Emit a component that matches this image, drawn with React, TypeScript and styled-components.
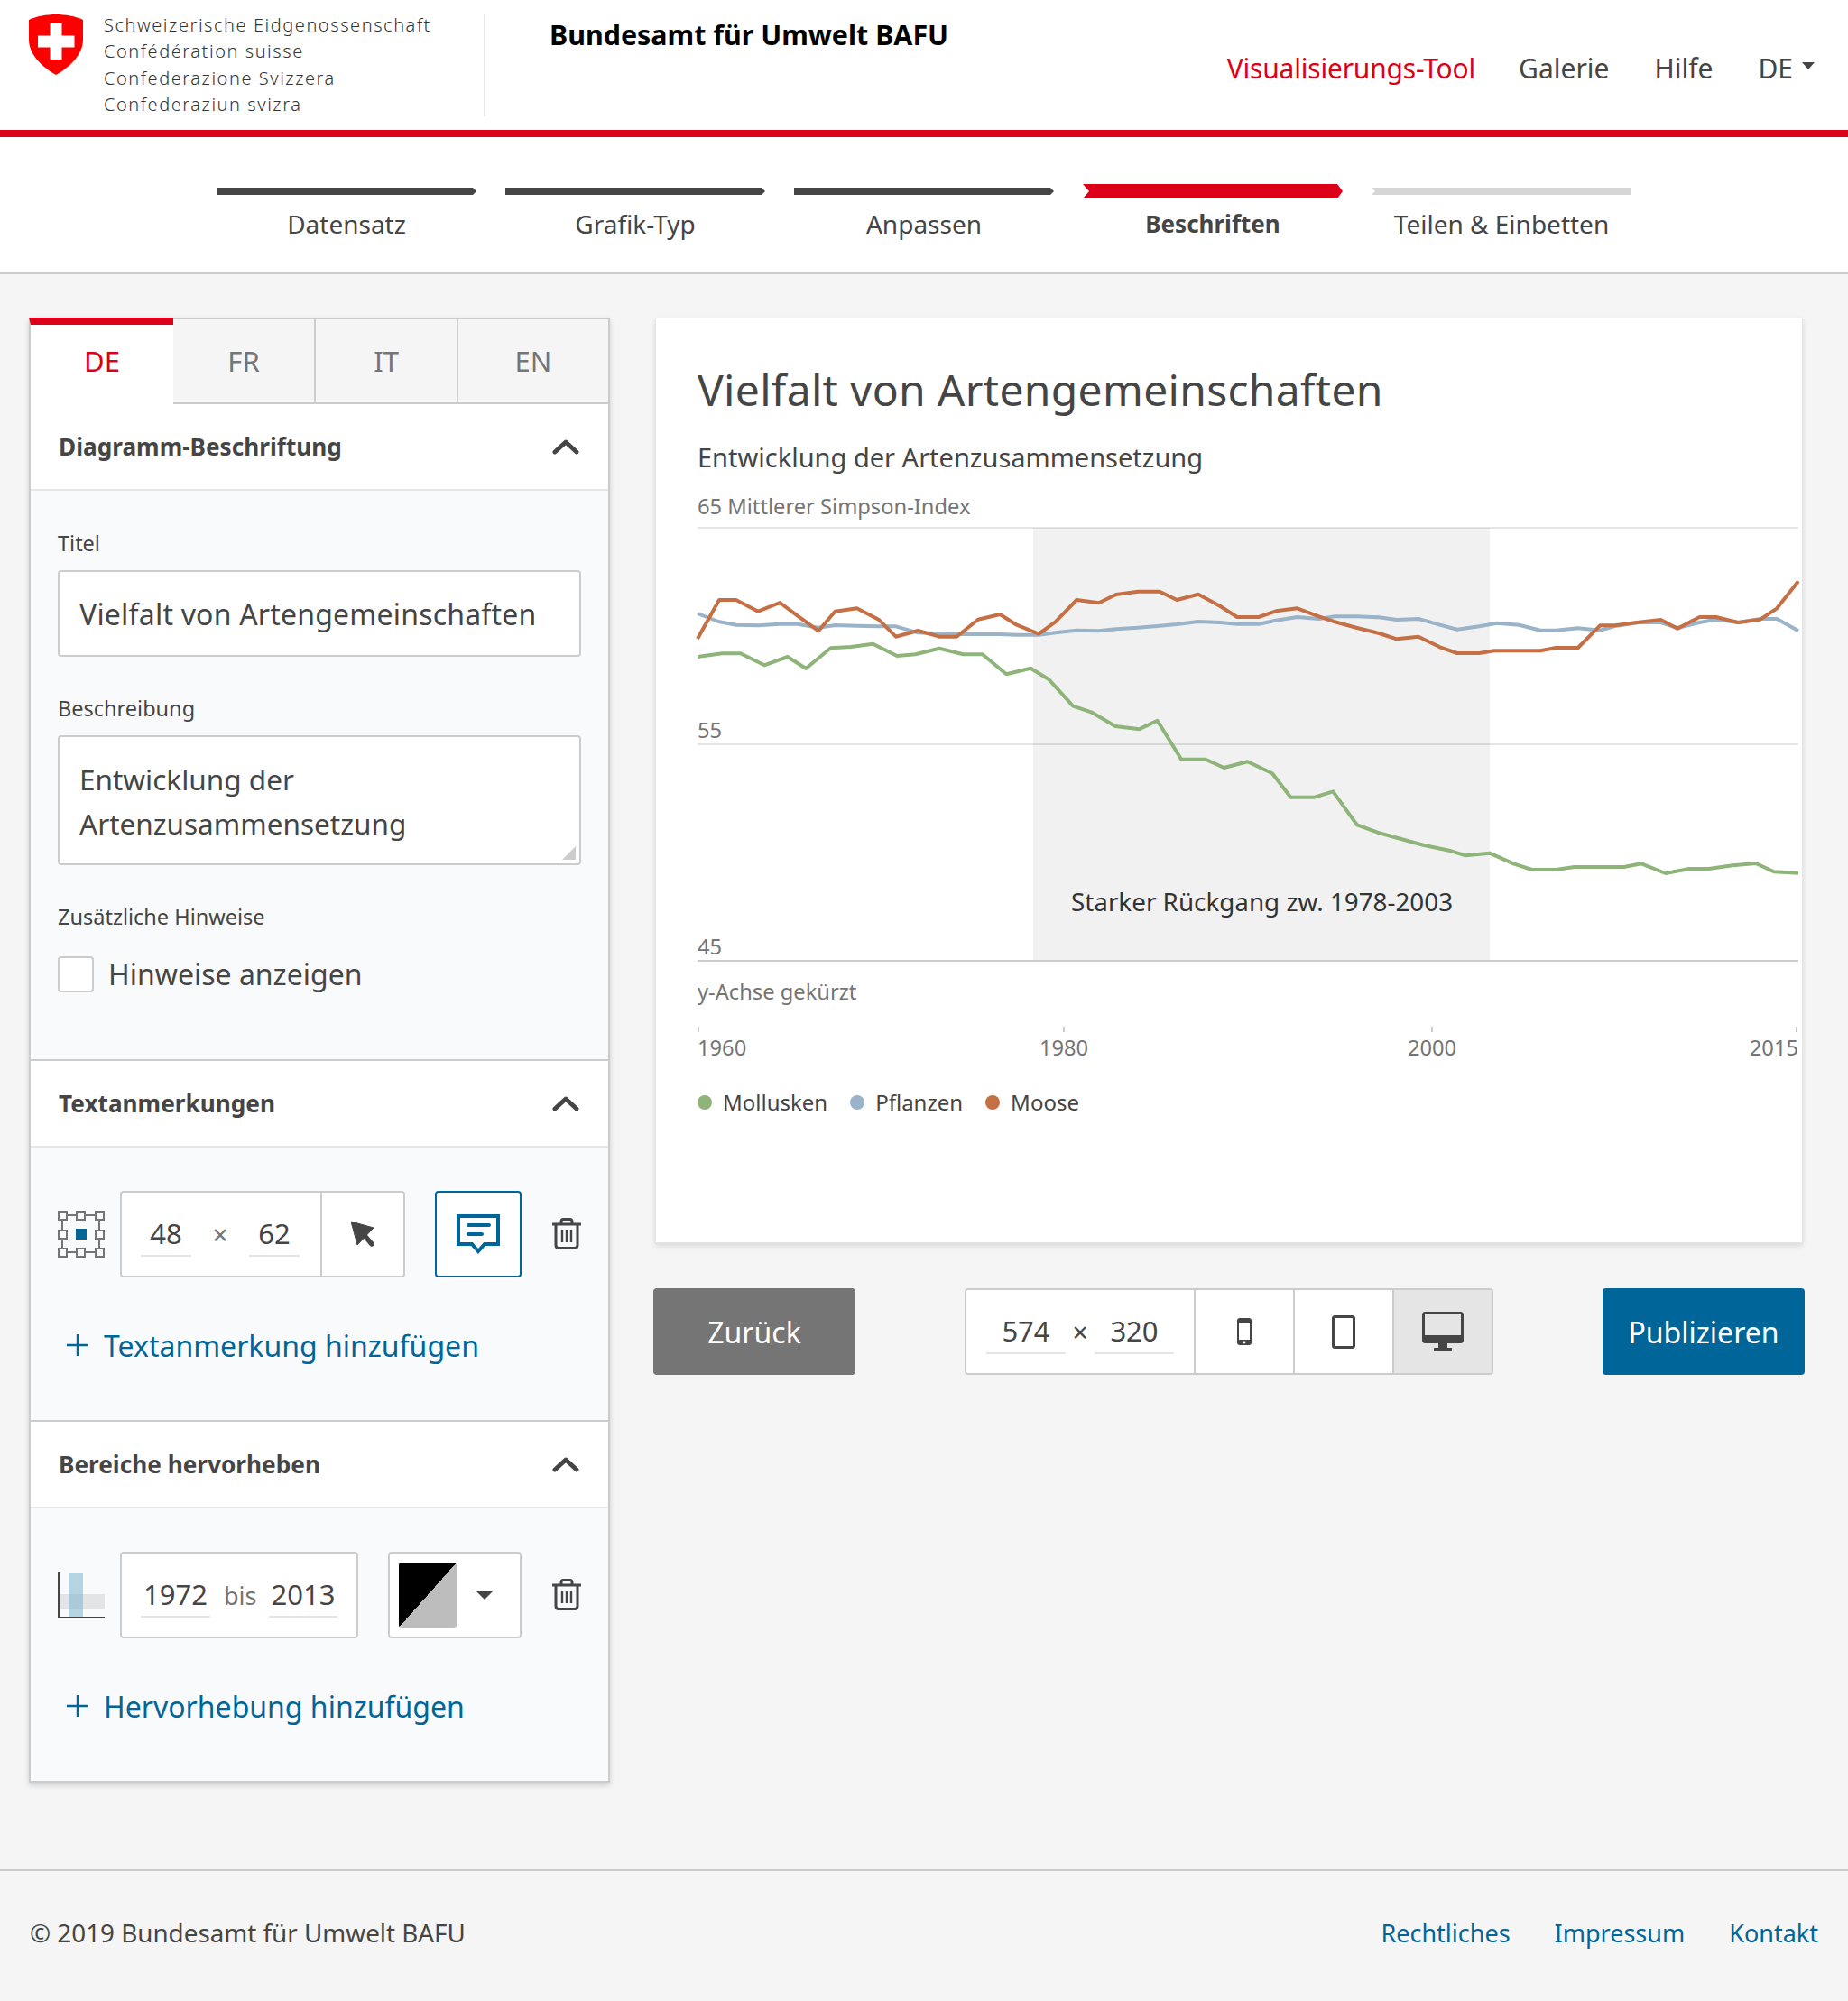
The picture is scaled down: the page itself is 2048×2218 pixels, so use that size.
import React from "react"
import styled, { createGlobalStyle } from "styled-components"

const RED = "#dc0018"
const BLUE = "#006699"
const TEXT = "#454545"
const MUTED = "#757575"
const BORDER = "#cccccc"
const LIGHT = "#e5e5e5"

const GlobalStyle = createGlobalStyle`
    * {
        box-sizing: border-box;
    }

    html, body {
        margin: 0;
        padding: 0;
        background: #f5f5f5;
        color: ${TEXT};
        font-family: "Noto Sans", "Open Sans", sans-serif;
    }
`

type Point = [number, number]

// traced from the chart, in px from the top left of the plot
const MOOSE: Point[] = [[0, 123], [24, 80], [42.7, 80], [67.2, 92.7], [91.3, 83], [110.9, 97.7], [134.1, 114.3], [152.5, 92.7], [176.6, 89.3], [200.7, 101.7], [219.8, 120.7], [244.3, 114], [268, 120.7], [287.2, 120.7], [310.9, 101.7], [335.3, 96], [353.7, 107.7], [378.2, 117.7], [396.6, 104.3], [420.2, 80], [444.7, 83.3], [463.9, 74], [488.4, 70.7], [512.1, 70.7], [531.3, 80], [554.9, 73.7], [579, 86.7], [598, 99], [621.9, 99], [641.1, 92.3], [664.7, 89.3], [688.8, 98.3], [706.4, 104.3], [730.9, 111], [755.3, 117], [774.9, 123.3], [799, 120.7], [822.7, 132.3], [841.9, 139], [866.4, 139], [882.7, 136.3], [934.1, 136.3], [951.3, 133], [975.8, 133], [1000.2, 108.3], [1016.6, 108.3], [1043.1, 104.7], [1067.6, 102], [1086, 111.7], [1110.4, 99], [1128.8, 99], [1153.3, 105], [1177.8, 101.7], [1196.2, 89.3], [1220, 59.3]]
const PLANTS: Point[] = [[0, 95], [23.1, 104], [42.7, 107.7], [67.2, 108.3], [91.3, 106.7], [110.9, 106.7], [134.1, 110.7], [152.5, 108], [176.6, 108.7], [200.7, 109.3], [219.8, 109.3], [244.3, 116.3], [268, 117.3], [287.2, 118], [310.9, 118], [335.3, 118], [353.7, 118.7], [378.2, 118.7], [396.6, 116.3], [420.2, 113.7], [444.7, 114.3], [463.9, 112.3], [488.4, 110.7], [512.1, 108.7], [531.3, 107], [554.9, 104], [579, 105], [597.8, 106.7], [621.9, 106.7], [641.1, 102.7], [664.7, 99], [688.8, 101], [706.4, 98.3], [730.9, 98.3], [755.3, 99.3], [774.9, 102], [799, 101], [822.7, 107.7], [841.9, 112.7], [866.4, 109.3], [886, 105.7], [910.4, 107.7], [934.1, 113.7], [951.3, 113.7], [975.8, 111.3], [1000.2, 113.7], [1016.6, 109], [1043.1, 105], [1067.6, 105], [1086, 111], [1110.4, 105], [1128.8, 101.7], [1153.3, 105], [1177.8, 101], [1196.2, 101], [1220, 114.3]]
const MOLLUSCS: Point[] = [[0, 143], [27.2, 139.3], [47.6, 139.3], [74.1, 152.3], [99.8, 143], [120.2, 156], [147.6, 133.3], [170, 132], [194.5, 128.7], [221.1, 142], [241.5, 140.3], [268, 133.7], [294.5, 140.3], [315.8, 140.3], [342.3, 162.3], [369.2, 155.7], [389.6, 168.3], [416.2, 197.7], [436.2, 204.3], [463.1, 220], [489.6, 223.3], [509.6, 213.7], [536.2, 256.7], [563.1, 256.7], [583.5, 266], [609.6, 259.3], [637, 272.3], [657.4, 298.7], [683.9, 298.7], [704.3, 292.3], [730.9, 329.3], [755.3, 338.3], [779.8, 345], [804.3, 351.7], [832.9, 357.7], [851.3, 363.3], [877.8, 360.7], [904.3, 372.3], [924.7, 379], [951.3, 379], [971.7, 376], [1026.8, 376], [1046, 372.3], [1072.9, 383], [1099, 378], [1120.7, 378], [1147.2, 374.3], [1172.9, 372], [1192.9, 381.3], [1220, 382.7]]

const SERIES = [
    { name: "Mollusken", color: "#8fb479", points: MOLLUSCS },
    { name: "Pflanzen", color: "#9ab3c8", points: PLANTS },
    { name: "Moose", color: "#c56f45", points: MOOSE },
]

const STEPS = ["Datensatz", "Grafik-Typ", "Anpassen", "Beschriften", "Teilen & Einbetten"]
const ACTIVE_STEP = 3
const LANGUAGES = ["DE", "FR", "IT", "EN"]
const X_TICKS = [
    { label: "1960", x: 1, textX: 0, anchor: "start" },
    { label: "1980", x: 406, textX: 406, anchor: "middle" },
    { label: "2000", x: 814, textX: 814, anchor: "middle" },
    { label: "2015", x: 1218, textX: 1220, anchor: "end" },
]

const Shield = () => (
    <svg width="60" height="67" viewBox="0 0 60 67">
        <path d="M0 6C8 2 20 0 30 0C40 0 52 2 60 6V28C60 44 46 58 30 67C14 58 0 44 0 28Z" fill="#ff0000" />
        <path d="M23.5 10H36.5V23.5H50.5V36.5H36.5V50H23.5V36.5H10V23.5H23.5Z" fill="#fff" />
    </svg>
)

const Chevron = () => (
    <svg width="30" height="18" viewBox="0 0 30 18">
        <path d="M3 15L15 4L27 15" fill="none" stroke={TEXT} strokeWidth="5" strokeLinecap="round" strokeLinejoin="round" />
    </svg>
)

const Trash = () => (
    <TrashSvg width="32" height="35" viewBox="0 0 32 35" fill="none" stroke={TEXT} strokeWidth="3">
        <path d="M0 7H32" />
        <path d="M10 7V4C10 2.500 11 1.500 12.500 1.500H19.500C21 1.500 22 2.500 22 4V7" />
        <path d="M4 7V30C4 32 5 33.500 7 33.500H25C27 33.500 28 32 28 30V7" />
        <path d="M11 13V27M16 13V27M21 13V27" strokeWidth="2.400" />
    </TrashSvg>
)

const Plus = () => (
    <svg width="24" height="24" viewBox="0 0 24 24">
        <path d="M12 0V24M0 12H24" stroke={BLUE} strokeWidth="2.4" />
    </svg>
)

const CursorIcon = () => (
    <svg width="28" height="30" viewBox="0 0 28 30">
        <path d="M1 1L26 8L8 27Z" fill={TEXT} stroke={TEXT} strokeWidth="1" strokeLinejoin="round" />
        <path d="M13 13L24 26" stroke={TEXT} strokeWidth="5.500" strokeLinecap="round" />
    </svg>
)

const CommentIcon = () => (
    <svg width="48" height="44" viewBox="0 0 48 44" fill="none" stroke={BLUE} strokeWidth="4">
        <path d="M2 2H46V33H31L24 41L17 33H2Z" />
        <path d="M13 12H36M13 22H28" strokeLinecap="round" />
    </svg>
)

const ANCHORS: Point[] = [[5, 5], [25, 5], [46, 5], [5, 26], [46, 26], [5, 46], [25, 46], [46, 46]]

const AnchorGridIcon = () => (
    <svg width="52" height="52" viewBox="0 0 52 52">
        <path d="M5 5H46V46H5Z" fill="none" stroke={MUTED} strokeWidth="2" />
        {ANCHORS.map(([x, y]) => (
            <rect key={`${x}-${y}`} x={x - 4} y={y - 4} width="9" height="9" fill="#f9fafb" stroke={MUTED} strokeWidth="2" />
        ))}
        <rect x="20" y="20" width="12" height="12" fill={BLUE} />
    </svg>
)

const HighlightIcon = () => (
    <svg width="52" height="52" viewBox="0 0 52 52">
        <rect x="2" y="25" width="50" height="16" fill="#d8dadb" opacity=".7" />
        <rect x="12" y="2" width="16" height="48" fill="#7fb2cc" opacity=".55" />
        <path d="M1 0V51H52" fill="none" stroke={TEXT} strokeWidth="2" />
    </svg>
)

const PhoneIcon = () => (
    <svg width="16" height="30" viewBox="0 0 16 30">
        <rect width="16" height="30" rx="3" fill={TEXT} />
        <rect x="2" y="5" width="12" height="19" fill="#fff" />
        <circle cx="8" cy="27" r="1.400" fill="#fff" />
    </svg>
)

const TabletIcon = () => (
    <svg width="26" height="37" viewBox="0 0 26 37">
        <rect x="1.500" y="1.500" width="23" height="34" rx="2" fill="none" stroke={TEXT} strokeWidth="3" />
    </svg>
)

const DesktopIcon = () => (
    <svg width="46" height="44" viewBox="0 0 46 44">
        <path d="M3 0H43C44.500 0 46 1.500 46 3V32C46 33.500 44.500 35 43 35H3C1.500 35 0 33.500 0 32V3C0 1.500 1.500 0 3 0Z" fill={TEXT} />
        <rect x="3" y="3" width="40" height="23" fill="#e5e5e5" />
        <path d="M18 35H28V40H33V44H13V40H18Z" fill={TEXT} />
    </svg>
)

const toPath = (points: Point[]) => points.map(([x, y]) => `${x},${y}`).join(" ")

const SectionBlock = ({ title, children, first }: { title: string; children: React.ReactNode; first?: boolean }) => (
    <Section $first={first}>
        <SectionHeader>
            <SectionTitle>{title}</SectionTitle>
            <Chevron />
        </SectionHeader>
        {children}
    </Section>
)

export default function App() {
    return (
        <Page>
            <GlobalStyle />
            <Header>
                <Brand>
                    <Shield />
                    <BrandLines>
                        <span>Schweizerische Eidgenossenschaft</span>
                        <span>Confédération suisse</span>
                        <span>Confederazione Svizzera</span>
                        <span>Confederaziun svizra</span>
                    </BrandLines>
                </Brand>
                <Office>Bundesamt für Umwelt BAFU</Office>
                <Nav>
                    <NavLink $active>Visualisierungs-Tool</NavLink>
                    <NavLink>Galerie</NavLink>
                    <NavLink>Hilfe</NavLink>
                    <NavLink>DE<Caret /></NavLink>
                </Nav>
            </Header>

            <Stepper>
                {STEPS.map((step, index) => (
                    <Step key={step}>
                        <BarSlot>
                            <StepBar $state={index === ACTIVE_STEP ? "active" : index > ACTIVE_STEP ? "todo" : "done"} />
                        </BarSlot>
                        <StepLabel $active={index === ACTIVE_STEP}>{step}</StepLabel>
                    </Step>
                ))}
            </Stepper>

            <Main>
                <Panel>
                    <Tabs>
                        {LANGUAGES.map((lang, index) => (
                            <Tab key={lang} $active={index === 0}>{lang}</Tab>
                        ))}
                    </Tabs>

                    <SectionBlock title="Diagramm-Beschriftung" first>
                        <LabelsBody>
                            <FieldLabel>Titel</FieldLabel>
                            <TextField>Vielfalt von Artengemeinschaften</TextField>
                            <FieldLabel $gap>Beschreibung</FieldLabel>
                            <TextArea>Entwicklung der<br />Artenzusammensetzung</TextArea>
                            <FieldLabel $gap>Zusätzliche Hinweise</FieldLabel>
                            <CheckRow>
                                <CheckBox />
                                <CheckText>Hinweise anzeigen</CheckText>
                            </CheckRow>
                        </LabelsBody>
                    </SectionBlock>

                    <SectionBlock title="Textanmerkungen">
                        <ListBody>
                            <ControlRow>
                                <AnchorGridIcon />
                                <InputGroup $width={316}>
                                    <NumberPair>
                                        <NumberValue $width={56}>48</NumberValue>
                                        <Times>×</Times>
                                        <NumberValue $width={56}>62</NumberValue>
                                    </NumberPair>
                                    <CursorCell><CursorIcon /></CursorCell>
                                </InputGroup>
                                <CommentButton><CommentIcon /></CommentButton>
                                <Trash />
                            </ControlRow>
                            <AddLink><Plus />Textanmerkung hinzufügen</AddLink>
                        </ListBody>
                    </SectionBlock>

                    <SectionBlock title="Bereiche hervorheben">
                        <ListBody>
                            <ControlRow>
                                <HighlightIcon />
                                <InputGroup $width={264}>
                                    <RangePair>
                                        <NumberValue $width={77}>1972</NumberValue>
                                        <RangeWord>bis</RangeWord>
                                        <NumberValue $width={76}>2013</NumberValue>
                                    </RangePair>
                                </InputGroup>
                                <ColorSelect>
                                    <Swatch />
                                    <SelectCaret />
                                </ColorSelect>
                                <Trash />
                            </ControlRow>
                            <AddLink><Plus />Hervorhebung hinzufügen</AddLink>
                        </ListBody>
                    </SectionBlock>
                </Panel>

                <Preview>
                    <Card>
                        <ChartTitle>Vielfalt von Artengemeinschaften</ChartTitle>
                        <ChartSubtitle>Entwicklung der Artenzusammensetzung</ChartSubtitle>
                        <ChartSvg width="1220" height="640" viewBox="0 -45 1220 640">
                            <GridLine x1="0" x2="1220" y1="0" y2="0" />
                            <GridLine x1="0" x2="1220" y1="240" y2="240" />
                            <rect x="372" y="0" width="506" height="480" fill="#000" opacity=".055" />
                            <line x1="0" x2="1220" y1="480" y2="480" stroke={BORDER} strokeWidth="2" />
                            <AxisText x="0" y="-24">65 Mittlerer Simpson-Index</AxisText>
                            <AxisText x="0" y="224">55</AxisText>
                            <AxisText x="0" y="464">45</AxisText>
                            {SERIES.map((s) => (
                                <polyline key={s.name} points={toPath(s.points)} fill="none" stroke={s.color} strokeWidth="4" strokeLinejoin="round" />
                            ))}
                            <NoteText x="414" y="414">Starker Rückgang zw. 1978-2003</NoteText>
                            <AxisText x="0" y="514">y-Achse gekürzt</AxisText>
                            {X_TICKS.map((tick) => (
                                <g key={tick.label}>
                                    <line x1={tick.x} x2={tick.x} y1="553" y2="559" stroke={BORDER} strokeWidth="2" />
                                    <AxisText x={tick.textX} y="576" textAnchor={tick.anchor}>{tick.label}</AxisText>
                                </g>
                            ))}
                        </ChartSvg>
                        <Legend>
                            {SERIES.map((s) => (
                                <LegendItem key={s.name}>
                                    <LegendDot $color={s.color} />
                                    {s.name}
                                </LegendItem>
                            ))}
                        </Legend>
                    </Card>

                    <Actions>
                        <ActionButton $color={MUTED}>Zurück</ActionButton>
                        <SizeGroup>
                            <SizeValues>
                                <NumberValue $width={88}>574</NumberValue>
                                <SizeTimes>×</SizeTimes>
                                <NumberValue $width={88}>320</NumberValue>
                            </SizeValues>
                            <DeviceCell><PhoneIcon /></DeviceCell>
                            <DeviceCell><TabletIcon /></DeviceCell>
                            <DeviceCell $active><DesktopIcon /></DeviceCell>
                        </SizeGroup>
                        <ActionButton $color={BLUE}>Publizieren</ActionButton>
                    </Actions>
                </Preview>
            </Main>

            <Footer>
                <Copyright>© 2019 Bundesamt für Umwelt BAFU</Copyright>
                <FooterLinks>
                    <FooterLink>Rechtliches</FooterLink>
                    <FooterLink>Impressum</FooterLink>
                    <FooterLink>Kontakt</FooterLink>
                </FooterLinks>
            </Footer>
        </Page>
    )
}

const Page = styled.div`
    width: 2048px;
    height: 2218px;
    overflow: hidden;
    display: flex;
    flex-direction: column;
`

const Header = styled.header`
    display: flex;
    height: 152px;
    background: #fff;
    border-bottom: 8px solid ${RED};
    padding: 16px 37px 0 32px;
`

const Brand = styled.div`
    display: flex;
    gap: 23px;
    width: 506px;
    height: 113px;
    border-right: 2px solid ${LIGHT};
`

const BrandLines = styled.div`
    display: flex;
    flex-direction: column;
    font-size: 20px;
    font-weight: 300;
    color: #333;
    line-height: 29.3px;
    letter-spacing: 1.55px;
    margin-top: -3px;
`

const Office = styled.div`
    margin: 4px 0 0 71px;
    font-size: 30.4px;
    line-height: 38px;
    font-weight: 700;
    color: #000;
`

const Nav = styled.nav`
    margin-left: auto;
    display: flex;
    gap: 50px;
    padding-top: 36px;
`

const NavLink = styled.a<{ $active?: boolean }>`
    display: flex;
    align-items: center;
    height: 46px;
    font-size: 30px;
    letter-spacing: ${(p) => (p.$active ? "-.2px" : "0")};
    margin-right: ${(p) => (p.$active ? "-2px" : "0")};
    color: ${(p) => (p.$active ? RED : TEXT)};
`

const Caret = styled.span`
    margin: -4px 0 0 10px;
    border-left: 7px solid transparent;
    border-right: 7px solid transparent;
    border-top: 8px solid ${TEXT};
`

const Stepper = styled.div`
    display: flex;
    justify-content: center;
    gap: 32px;
    height: 152px;
    padding-top: 48px;
    background: #fff;
    border-bottom: 2px solid ${BORDER};
`

const Step = styled.div`
    width: 288px;
    display: flex;
    flex-direction: column;
    align-items: center;
`

const BarSlot = styled.div`
    width: 100%;
    height: 28px;
    padding-top: 8px;
`

const barShapes = {
    done: "polygon(0 0, calc(100% - 4px) 0, 100% 50%, calc(100% - 4px) 100%, 0 100%)",
    active: "polygon(0 0, calc(100% - 6px) 0, 100% 50%, calc(100% - 6px) 100%, 0 100%, 7px 50%)",
    todo: "polygon(0 0, 100% 0, 100% 100%, 0 100%, 4px 50%)",
}

const StepBar = styled.div<{ $state: "done" | "active" | "todo" }>`
    height: ${(p) => (p.$state === "active" ? "16px" : "8px")};
    margin-top: ${(p) => (p.$state === "active" ? "-4px" : "0")};
    background: ${(p) => (p.$state === "active" ? RED : p.$state === "todo" ? "#d5d5d5" : TEXT)};
    clip-path: ${(p) => barShapes[p.$state]};
`

const StepLabel = styled.div<{ $active?: boolean }>`
    font-size: ${(p) => (p.$active ? "26px" : "28px")};
    line-height: 40px;
    font-weight: ${(p) => (p.$active ? 700 : 400)};
`

const Main = styled.main`
    flex: 1;
    display: flex;
    align-items: flex-start;
    gap: 48px;
    padding: 48px 48px 0 32px;
`

const Panel = styled.aside`
    width: 644px;
    flex: none;
    background: #f9fafb;
    border: solid ${BORDER};
    border-width: 0 2px 2px;
    box-shadow: 0 3px 6px rgba(0, 0, 0, .16);
`

const Tabs = styled.div`
    display: flex;
    height: 96px;
    margin: 0 -2px;
    background: #fff;
`

const Tab = styled.div<{ $active?: boolean }>`
    flex: ${(p) => (p.$active ? "0 0 160px" : "0 0 158px")};
    display: flex;
    align-items: center;
    justify-content: center;
    font-size: 31px;
    color: ${(p) => (p.$active ? RED : MUTED)};
    background: ${(p) => (p.$active ? "#fff" : "#f5f5f5")};
    border: solid ${BORDER};
    border-width: ${(p) => (p.$active ? "8px 0 0 2px" : "2px 2px 2px 0")};
    border-top-color: ${(p) => (p.$active ? RED : BORDER)};
    padding-bottom: ${(p) => (p.$active ? "8px" : "0")};

    &:last-child {
        flex: 1;
    }
`

const Section = styled.section<{ $first?: boolean }>`
    border-top: ${(p) => (p.$first ? "none" : `2px solid ${BORDER}`)};
`

const SectionHeader = styled.div`
    display: flex;
    align-items: center;
    justify-content: space-between;
    height: 96px;
    padding: 0 32px 0 31px;
    background: #fff;
    border-bottom: 2px solid ${LIGHT};
`

const SectionTitle = styled.h2`
    margin: 0;
    font-size: 26.2px;
    font-weight: 700;
`

const LabelsBody = styled.div`
    padding: 43px 30px 73px;
`

const FieldLabel = styled.div<{ $gap?: boolean }>`
    margin-top: ${(p) => (p.$gap ? "42px" : "0")};
    font-size: 23.5px;
    line-height: 30px;
`

const TextField = styled.div`
    margin-top: 15px;
    height: 96px;
    padding: 0 22px;
    display: flex;
    align-items: center;
    font-size: 32px;
    letter-spacing: .2px;
    white-space: nowrap;
    background: #fff;
    border: 2px solid ${BORDER};
    border-radius: 4px;
`

const TextArea = styled.div`
    position: relative;
    margin-top: 15px;
    height: 144px;
    padding: 22px 22px;
    font-size: 31.5px;
    line-height: 49px;
    background: #fff;
    border: 2px solid ${BORDER};
    border-radius: 4px;

    &::after {
        content: "";
        position: absolute;
        right: 4px;
        bottom: 4px;
        border-style: solid;
        border-width: 0 0 15px 15px;
        border-color: transparent transparent ${BORDER} transparent;
    }
`

const CheckRow = styled.div`
    display: flex;
    align-items: center;
    gap: 16px;
    margin-top: 27px;
`

const CheckBox = styled.div`
    width: 40px;
    height: 40px;
    background: #fff;
    border: 2px solid ${BORDER};
    border-radius: 4px;
`

const CheckText = styled.div`
    font-size: 32px;
`

const ListBody = styled.div`
    padding: 48px 30px 61px;
`

const TrashSvg = styled.svg`
    margin-bottom: 2px;
`

const ControlRow = styled.div`
    display: flex;
    align-items: center;
    height: 96px;

    & > svg:first-child {
        flex: none;
        margin-right: 17px;
    }

    & > svg:last-child {
        margin-left: auto;
    }
`

const InputGroup = styled.div<{ $width: number }>`
    display: flex;
    width: ${(p) => p.$width}px;
    height: 96px;
    background: #fff;
    border: 2px solid ${BORDER};
    border-radius: 4px;
`

const NumberPair = styled.div`
    display: flex;
    align-items: center;
    gap: 21px;
    width: 220px;
    padding-left: 21px;
`

const RangePair = styled.div`
    display: flex;
    align-items: center;
    gap: 15px;
    padding-left: 21px;
`

const NumberValue = styled.div<{ $width: number }>`
    width: ${(p) => p.$width}px;
    height: 50px;
    flex: none;
    text-align: center;
    font-size: 31px;
    line-height: 48px;
    border-bottom: 2px solid ${LIGHT};
`

const Times = styled.span`
    font-size: 30px;
    color: ${MUTED};
    width: 22px;
    text-align: center;
`

const RangeWord = styled.span`
    font-size: 27px;
    width: 35px;
    color: ${MUTED};
`

const CursorCell = styled.div`
    flex: 1;
    display: flex;
    align-items: center;
    justify-content: center;
    border-left: 2px solid ${BORDER};
`

const CommentButton = styled.div`
    width: 96px;
    height: 96px;
    margin-left: 33px;
    display: flex;
    align-items: center;
    justify-content: center;
    background: #fff;
    border: 2px solid ${BLUE};
    border-radius: 4px;
`

const ColorSelect = styled.div`
    width: 148px;
    height: 96px;
    margin-left: 33px;
    display: flex;
    align-items: center;
    padding-left: 10px;
    background: #fff;
    border: 2px solid ${BORDER};
    border-radius: 4px;
`

const Swatch = styled.div`
    width: 64px;
    height: 72px;
    border-radius: 3px;
    background: linear-gradient(to top left, #bdbdbd 50%, #000 50%);
`

const SelectCaret = styled.span`
    margin-left: 21px;
    border-left: 10px solid transparent;
    border-right: 10px solid transparent;
    border-top: 10px solid ${TEXT};
`

const AddLink = styled.a`
    display: flex;
    align-items: center;
    gap: 17px;
    margin-top: 53px;
    padding-left: 10px;
    height: 44px;
    font-size: 32px;
    color: ${BLUE};
`

const Preview = styled.div`
    width: 1276px;
    flex: none;
`

const Card = styled.div`
    height: 1026px;
    margin: 0 2px;
    padding: 48px 6px 0 46px;
    background: #fff;
    border: 1px solid ${LIGHT};
    box-shadow: 0 3px 6px rgba(0, 0, 0, .12);
`

const ChartTitle = styled.h1`
    margin: 0;
    font-size: 48px;
    letter-spacing: .3px;
    line-height: 62px;
    font-weight: 400;
`

const ChartSubtitle = styled.p`
    margin: 24px 0 0;
    font-size: 29px;
    line-height: 40px;
`

const ChartSvg = styled.svg`
    display: block;
    margin-top: 13px;
    overflow: visible;
`

const GridLine = styled.line`
    stroke: ${LIGHT};
    stroke-width: 2;
`

const AxisText = styled.text`
    font-size: 23.7px;
    fill: ${MUTED};
    dominant-baseline: central;
`

const NoteText = styled.text`
    font-size: 27.8px;
    fill: #333;
    dominant-baseline: central;
`

const Legend = styled.div`
    display: flex;
    gap: 25px;
    margin-top: 26px;
`

const LegendItem = styled.div`
    display: flex;
    align-items: center;
    gap: 12px;
    font-size: 24px;
    line-height: 32px;
`

const LegendDot = styled.span<{ $color: string }>`
    width: 16px;
    height: 16px;
    border-radius: 50%;
    background: ${(p) => p.$color};
`

const Actions = styled.div`
    display: flex;
    align-items: center;
    justify-content: space-between;
    margin-top: 50px;
`

const ActionButton = styled.div<{ $color: string }>`
    width: 224px;
    height: 96px;
    display: flex;
    align-items: center;
    justify-content: center;
    font-size: 32px;
    color: #fff;
    background: ${(p) => p.$color};
    border-radius: 4px;
`

const SizeGroup = styled.div`
    display: flex;
    width: 586px;
    height: 96px;
    background: #fff;
    border: 2px solid ${BORDER};
    border-radius: 4px;
`

const SizeValues = styled.div`
    display: flex;
    align-items: center;
    justify-content: center;
    width: 252px;
    gap: 6px;
`

const SizeTimes = styled.span`
    font-size: 30px;
    width: 20px;
    text-align: center;
`

const DeviceCell = styled.div<{ $active?: boolean }>`
    flex: 1;
    display: flex;
    align-items: center;
    justify-content: center;
    border-left: 2px solid ${BORDER};
    background: ${(p) => (p.$active ? LIGHT : "#fff")};
`

const Footer = styled.footer`
    height: 146px;
    display: flex;
    align-items: center;
    justify-content: space-between;
    padding: 0 33px 8px;
    border-top: 2px solid ${BORDER};
`

const Copyright = styled.div`
    font-size: 27.8px;
`

const FooterLinks = styled.div`
    display: flex;
    gap: 49px;
    font-size: 27px;
`

const FooterLink = styled.a`
    color: ${BLUE};
`
